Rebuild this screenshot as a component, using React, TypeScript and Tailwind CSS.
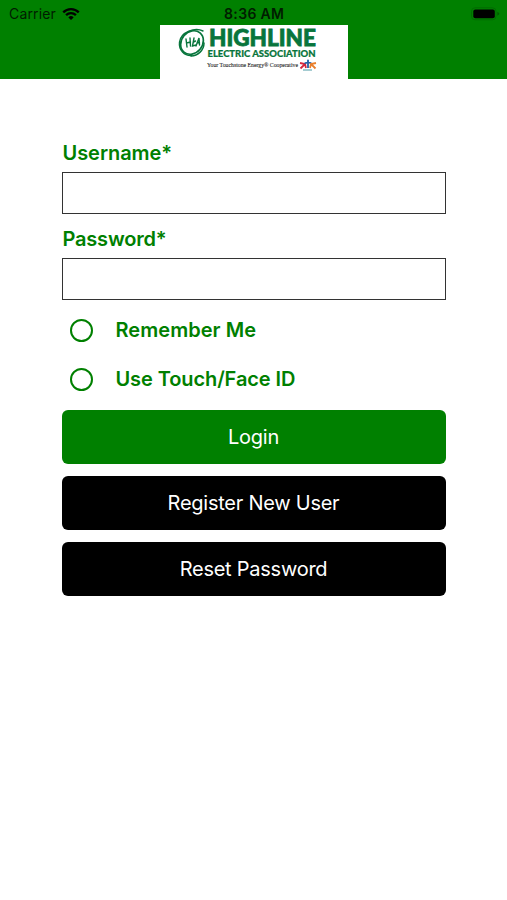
const options = [
  { key: 'remember', label: 'Remember Me', tracking: 'tracking-[0.05px]' },
  { key: 'biometric', label: 'Use Touch/Face ID', tracking: 'tracking-[-0.1px]' },
];

const actions = [
  { key: 'login', label: 'Login', color: 'bg-[#008000]' },
  { key: 'register', label: 'Register New User', color: 'bg-black' },
  { key: 'reset', label: 'Reset Password', color: 'bg-black' },
];

function StatusBar() {
  return (
    <div className="relative flex h-[25px] items-center justify-between pl-[9px] pr-[7px] pt-[2px] text-[14px] text-[#001c00]">
      <div className="flex items-center gap-[6px]">
        <span className="tracking-[0.15px]">Carrier</span>
        <svg width="18" height="14" viewBox="0 0 19 14" fill="none" stroke="#000" strokeWidth="2.5">
          <path d="M1.3 5.2a11.6 11.6 0 0 1 16.4 0" />
          <path d="M4.3 8.2a7.4 7.4 0 0 1 10.4 0" />
          <path d="M9.5 13.4 6.7 10.6a4 4 0 0 1 5.6 0z" fill="#000" stroke="none" />
        </svg>
      </div>
      <span className="absolute left-[224px] text-[14px] font-semibold tracking-[0.35px]">8:36 AM</span>
      <svg width="29" height="14" viewBox="0 0 29 14">
        <rect x="0.5" y="0.8" width="24.5" height="12" rx="3.5" fill="none" stroke="#006c00" />
        <rect x="2.3" y="2.4" width="21.5" height="8.8" rx="2" fill="#000" />
        <path d="M26.3 4.8q2 .8 2 2t-2 2z" fill="#005c00" />
      </svg>
    </div>
  );
}

function Logo() {
  return (
    <svg width="188" height="54" viewBox="0 0 188 54" className="bg-white">
      <g fill="none" stroke="#08753c" strokeLinecap="round">
        <ellipse cx="32" cy="17.5" rx="10.5" ry="12.5" strokeWidth="1.7" transform="rotate(40 32 17.5)" />
        <path d="M43 6C35 2 21 7 19.5 17c-1 8 5 14 12 13.500" strokeWidth="1.4" />
        <path d="M31 31c7 0 13-6 13-13" strokeWidth="1.5" />
        <path d="M26 14l1 8M30 13l.5 8M26.500 18l4-1M34 13l-1.500 8 3.500-1M33.500 17l2-1M36 21l3-8 .5 7M37 18l2.500-.5" strokeWidth="1.4" />
      </g>
      <g fill="#08753c" fontFamily="Lato, sans-serif" fontWeight="900">
        <text x="49" y="21.200" fontSize="23" textLength="107" lengthAdjust="spacingAndGlyphs" stroke="#08753c" strokeWidth="0.8">HIGHLINE</text>
        <text x="47.500" y="32" fontSize="9" textLength="108" lengthAdjust="spacingAndGlyphs" stroke="#08753c" strokeWidth="0.2">ELECTRIC ASSOCIATION</text>
      </g>
      <text x="47" y="42" fontSize="6.800" fontFamily="'Liberation Serif', serif" fill="#222" stroke="#222" strokeWidth="0.1" textLength="91" lengthAdjust="spacingAndGlyphs">
        Your Touchstone Energy® Cooperative
      </text>
      <g fill="none" strokeWidth="1.800">
        <path d="M140 38l5 1-4.500 4.500M145 39l1 4" stroke="#d3273e" />
        <path d="M148 43v-7M144.500 38.500l3.500-1.500 3.500 1.500" stroke="#2262a8" />
        <path d="M156 38l-5 1 4.500 4.500M151 39l-1 4" stroke="#e9802d" />
        <path d="M143 45h9" stroke="#4c9aa5" strokeWidth="1" />
        <circle cx="148" cy="35.500" r="1" fill="#2262a8" stroke="none" />
      </g>
    </svg>
  );
}

function Field({ label, type, tracking }: { label: string; type: string; tracking: string }) {
  return (
    <label className="flex flex-col gap-[4px]">
      <span className={`h-[30px] pl-px text-[20px] leading-[30px] font-[560] text-[#008000] ${tracking}`}>{label}</span>
      <input type={type} className="h-[42px] w-full border border-[#333] bg-white px-2 outline-none" />
    </label>
  );
}

export default function App() {
  return (
    <div className="min-h-[900px] w-full bg-white font-['Inter',sans-serif]">
      <header className="flex h-[79px] flex-col bg-[#008000]">
        <StatusBar />
        <div className="flex justify-center pl-px">
          <Logo />
        </div>
      </header>

      <main className="mx-auto w-[384px] pt-[59px]">
        <div className="flex flex-col gap-[10px]">
          <Field label="Username*" type="text" tracking="tracking-[-0.05px]" />
          <Field label="Password*" type="password" tracking="tracking-[-0.2px]" />
        </div>

        <div className="mt-[6px] flex flex-col">
          {options.map(option => (
            <label key={option.key} className="flex h-[49px] items-center pl-[8px] text-[#008000]">
              <span className="size-[23px] rounded-full border-2 border-[#008000]" />
              <span className={`-mt-px ml-[23px] text-[20px] font-[560] ${option.tracking}`}>{option.label}</span>
            </label>
          ))}
        </div>

        <div className="mt-[6px] flex flex-col gap-[12px]">
          {actions.map(action => (
            <button
              key={action.key}
              className={`h-[54px] w-full rounded-[6px] text-[20px] tracking-[-0.25px] text-white ${action.color}`}
            >
              {action.label}
            </button>
          ))}
        </div>
      </main>
    </div>
  );
}
